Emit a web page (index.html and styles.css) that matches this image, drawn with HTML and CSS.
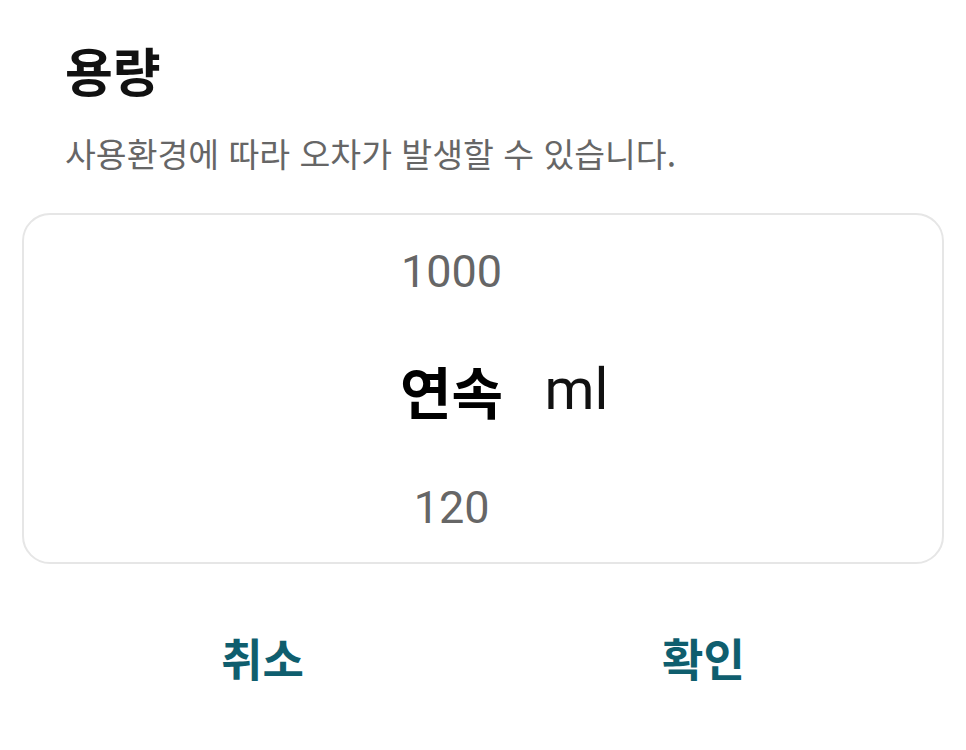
FILE: index.html
```html
<!DOCTYPE html>
<html lang="ko">
<head>
<meta charset="utf-8">
<link rel="stylesheet" href="styles.css">
</head>
<body>
<div class="dialog">
  <h1 class="title">용량</h1>
  <p class="desc">사용환경에 따라 오차가 발생할 수 있습니다.</p>
  <div class="card">
    <div class="picker">
      <div class="column">
        <div class="item dim">1000</div>
        <div class="item selected">연속</div>
        <div class="item dim">120</div>
      </div>
      <div class="unit">ml</div>
    </div>
  </div>
  <div class="actions">
    <button class="btn">취소</button>
    <button class="btn">확인</button>
  </div>
</div>
</body>
</html>
```

FILE: styles.css
```css
html, body {
  margin: 0;
  padding: 0;
  background: #ffffff;
}
body {
  font-family: Roboto, "Noto Sans CJK KR", sans-serif;
}
.dialog {
  width: 966px;
  height: 750px;
  padding: 0 22px;
  box-sizing: border-box;
  display: flex;
  flex-direction: column;
}
.title {
  margin: 41px 0 0 43px;
  font-family: "Noto Sans CJK KR", sans-serif;
  font-size: 52px;
  font-weight: 700;
  line-height: 58px;
  color: #111111;
}
.desc {
  margin: 34px 0 0 43px;
  font-family: "Noto Sans CJK KR", sans-serif;
  font-size: 33.5px;
  line-height: 40px;
  color: #666666;
}
.card {
  margin-top: 40px;
  height: 351px;
  box-sizing: border-box;
  border: 2px solid #e6e6e6;
  border-radius: 28px;
  display: flex;
  align-items: center;
  justify-content: center;
}
.picker {
  display: flex;
  align-items: center;
  margin-left: -6px;
  margin-top: 2px;
}
.column {
  width: 200px;
  display: flex;
  flex-direction: column;
  align-items: center;
}
.item {
  height: 118px;
  display: flex;
  align-items: center;
  justify-content: center;
}
.dim {
  font-size: 45px;
  color: #666666;
}
.selected {
  font-family: "Noto Sans CJK KR", sans-serif;
  font-size: 56px;
  font-weight: 700;
  color: #000000;
}
.unit {
  font-size: 57px;
  color: #111111;
  margin-left: -7px;
}
.actions {
  display: flex;
  margin: 43px 20px 0;
}
.btn {
  flex: 1;
  height: 100px;
  border: none;
  background: none;
  font-family: "Noto Sans CJK KR", sans-serif;
  font-size: 45px;
  font-weight: 700;
  color: #0f5e6e;
  padding: 0;
}
```
